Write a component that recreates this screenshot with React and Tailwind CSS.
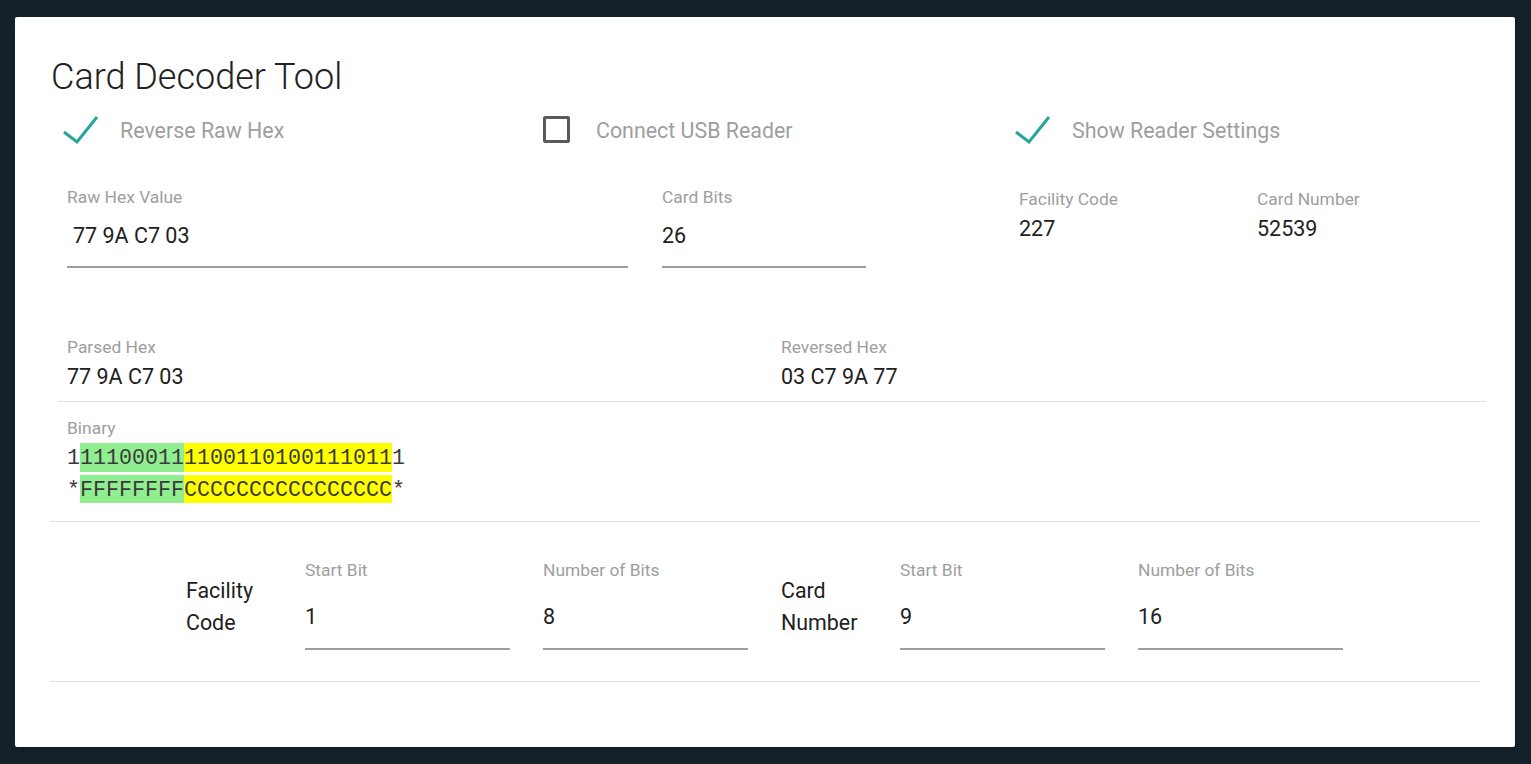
import React from "react";

const font = { fontFamily: "Roboto, 'Open Sans', sans-serif" };

function Check() {
  return (
    <svg width="70" height="40" className="absolute left-0 top-0">
      <polyline points="14,21 27,31 47,6" fill="none" stroke="#26a69a" strokeWidth="3" />
    </svg>
  );
}

function CheckItem({ checked, label }) {
  return (
    <div className="w-[476px] h-[40px] relative flex items-center">
      {checked ? (
        <Check />
      ) : (
        <div className="absolute left-[17px] top-[5px] w-[27px] h-[27px] border-[3px] border-[#5a5a5a] rounded-[2px]" />
      )}
      <span className="ml-[70px] text-[21.4px] text-[#9e9e9e] leading-[40px]">{label}</span>
    </div>
  );
}

function Field({ label, value, className = "", valueClass = "", gap = "mt-[14px]", pb = "pb-[15px]" }) {
  return (
    <div className={className}>
      <div className="text-[17.4px] leading-[20px] text-[#9e9e9e]">{label}</div>
      <div className={`${gap} ${pb} border-b-2 border-[#9e9e9e]`}>
        <div className={`text-[21.5px] leading-[30px] h-[30px] text-[#212121] ${valueClass}`}>{value}</div>
      </div>
    </div>
  );
}

function Display({ label, value, className = "" }) {
  return (
    <div className={className}>
      <div className="text-[17.4px] leading-[20px] text-[#9e9e9e]">{label}</div>
      <div className="mt-[5px] text-[21.5px] leading-[30px] text-[#212121]">{value}</div>
    </div>
  );
}

export default function App() {
  const mono = { fontFamily: "'Liberation Mono', 'DejaVu Sans Mono', monospace" };
  return (
    <div className="w-[1531px] h-[764px] bg-[#14202a] pt-[17px] pl-[15px]" style={font}>
      <div className="w-[1500px] h-[730px] bg-white rounded-[2px] shadow-md pt-[39px] px-[35px]">
        <h1 className="ml-[1px] text-[36px] leading-[42px] font-light text-[#212121]">Card Decoder Tool</h1>

        <div className="mt-[13px] flex">
          <CheckItem checked label="Reverse Raw Hex" />
          <CheckItem label="Connect USB Reader" />
          <CheckItem checked label="Show Reader Settings" />
        </div>

        <div className="flex items-start">
          <Field label="Raw Hex Value" value="77 9A C7 03" className="ml-[17px] mt-[36px] w-[561px]" valueClass="pl-[6px]" />
          <Field label="Card Bits" value="26" className="ml-[34px] mt-[36px] w-[204px]" />
          <Display label="Facility Code" value="227" className="ml-[153px] mt-[38px] w-[238px]" />
          <Display label="Card Number" value="52539" className="mt-[38px]" />
        </div>

        <div className="ml-[8px] w-[1428px] mt-[69px] flex border-b border-[#e0e0e0] pb-[9px]">
          <Display label="Parsed Hex" value="77 9A C7 03" className="w-[714px] px-[9px]" />
          <Display label="Reversed Hex" value="03 C7 9A 77" className="w-[714px] px-[9px]" />
        </div>

        <div className="pt-[16px] pb-[18px] pl-[17px] border-b border-[#e0e0e0]">
          <div className="text-[17.4px] leading-[20px] text-[#9e9e9e]">Binary</div>
          <div className="mt-[5px] flex flex-col gap-[3px] text-[21.67px] text-[#3a3a3a]" style={mono}>
            <div className="flex h-[29px] leading-[31px]">
              <span>1</span>
              <span className="bg-[#90ee90]">11100011</span>
              <span className="bg-[#ffff00]">1100110100111011</span>
              <span>1</span>
            </div>
            <div className="flex h-[28px] leading-[32px]">
              <span>*</span>
              <span className="bg-[#90ee90]">FFFFFFFF</span>
              <span className="bg-[#ffff00]">CCCCCCCCCCCCCCCC</span>
              <span>*</span>
            </div>
          </div>
        </div>

        <div className="pt-[38px] pb-[31px] border-b border-[#e0e0e0] flex items-start pl-[136px]">
          <div className="w-[119px] mt-[15px] text-[21.4px] leading-[32px] text-[#212121]">Facility<br />Code</div>
          <Field label="Start Bit" value="1" className="w-[205px] mr-[33px]" gap="mt-[22px]" pb="pb-[16px]" />
          <Field label="Number of Bits" value="8" className="w-[205px] mr-[33px]" gap="mt-[22px]" pb="pb-[16px]" />
          <div className="w-[119px] mt-[15px] text-[21.4px] leading-[32px] text-[#212121]">Card<br />Number</div>
          <Field label="Start Bit" value="9" className="w-[205px] mr-[33px]" gap="mt-[22px]" pb="pb-[16px]" />
          <Field label="Number of Bits" value="16" className="w-[205px]" gap="mt-[22px]" pb="pb-[16px]" />
        </div>
      </div>
    </div>
  );
}
